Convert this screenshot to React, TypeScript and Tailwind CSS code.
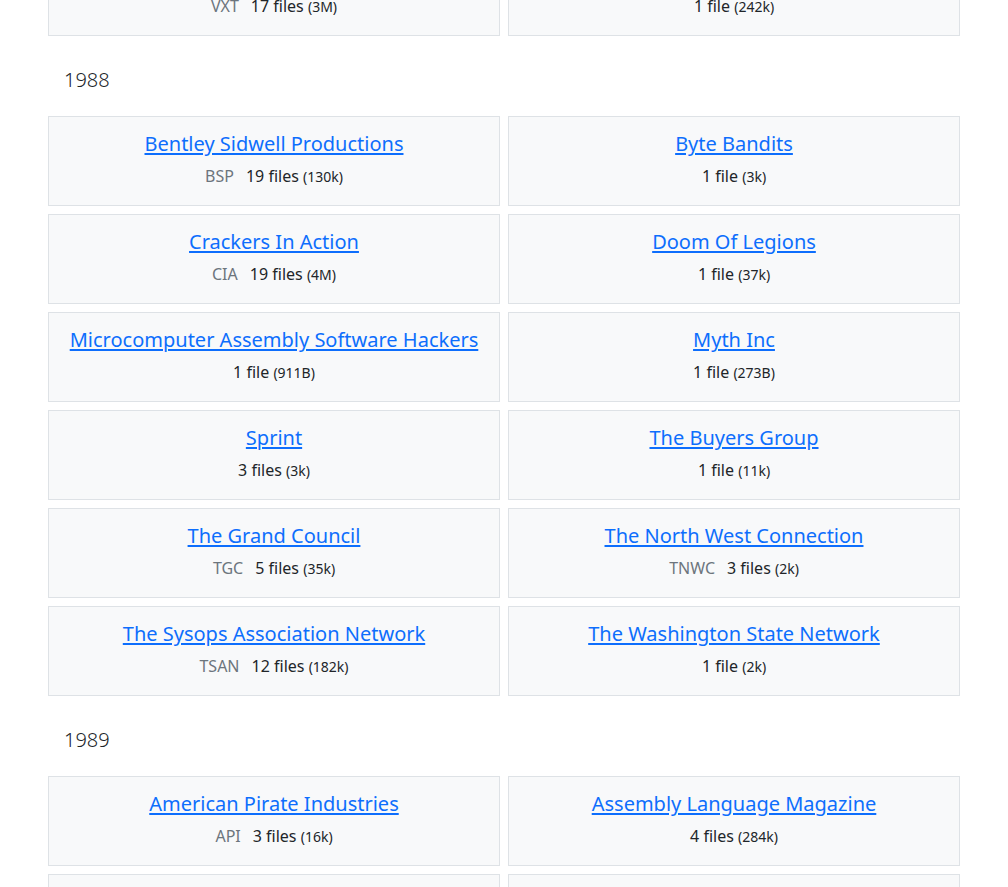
type Group = { name: string; abbr?: string; files: number; size: string };

const sections: { year?: string; groups: Group[] }[] = [
  {
    groups: [
      { name: 'Vortex', abbr: 'VXT', files: 17, size: '3M' },
      { name: 'Unknown', files: 1, size: '242k' },
    ],
  },
  {
    year: '1988',
    groups: [
      { name: 'Bentley Sidwell Productions', abbr: 'BSP', files: 19, size: '130k' },
      { name: 'Byte Bandits', files: 1, size: '3k' },
      { name: 'Crackers In Action', abbr: 'CIA', files: 19, size: '4M' },
      { name: 'Doom Of Legions', files: 1, size: '37k' },
      { name: 'Microcomputer Assembly Software Hackers', files: 1, size: '911B' },
      { name: 'Myth Inc', files: 1, size: '273B' },
      { name: 'Sprint', files: 3, size: '3k' },
      { name: 'The Buyers Group', files: 1, size: '11k' },
      { name: 'The Grand Council', abbr: 'TGC', files: 5, size: '35k' },
      { name: 'The North West Connection', abbr: 'TNWC', files: 3, size: '2k' },
      { name: 'The Sysops Association Network', abbr: 'TSAN', files: 12, size: '182k' },
      { name: 'The Washington State Network', files: 1, size: '2k' },
    ],
  },
  {
    year: '1989',
    groups: [
      { name: 'American Pirate Industries', abbr: 'API', files: 3, size: '16k' },
      { name: 'Assembly Language Magazine', files: 4, size: '284k' },
      { name: 'Atari Corp', files: 2, size: '8k' },
      { name: 'Borland', files: 1, size: '5k' },
    ],
  },
];

function GroupCard({ g }: { g: Group }) {
  return (
    <div className="bg-[#f8f9fa] border border-[#dee2e6] px-4 pt-[15px] pb-[17px] text-center">
      <a href="#" className="block h-6 text-[20px] leading-6 text-[#0d6efd] underline underline-offset-2 mb-2">
        {g.name}
      </a>
      <div className="h-6 text-[16px] leading-6 text-[#212529]">
        {g.abbr && <span className="text-[#6c757d] mr-3">{g.abbr}</span>}
        {g.files} {g.files === 1 ? 'file' : 'files'}{' '}
        <small className="text-[14px] leading-none">({g.size})</small>
      </div>
    </div>
  );
}

export default function App() {
  return (
    <div className="min-h-screen bg-white overflow-hidden font-['Noto_Sans',sans-serif]">
      <div className="px-12 -mt-[54px]">
        {sections.map((s, i) => (
          <div key={i}>
            {s.year && (
              <h2 className="pl-4 mt-8 mb-6 text-[20px] leading-6 font-light text-[#212529]">{s.year}</h2>
            )}
            <div className="grid grid-cols-2 gap-2">
              {s.groups.map((g) => (
                <GroupCard key={g.name} g={g} />
              ))}
            </div>
          </div>
        ))}
      </div>
    </div>
  );
}
